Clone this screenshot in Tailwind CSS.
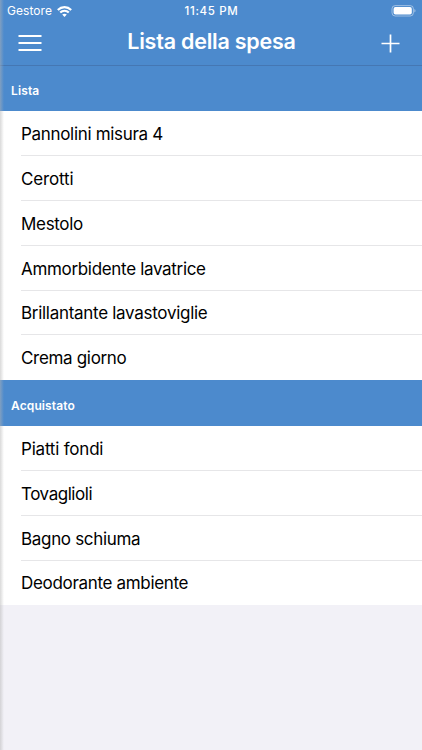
<!DOCTYPE html>
<html lang="it">
<head>
<meta charset="utf-8">
<title>Lista della spesa</title>
<script src="https://cdn.jsdelivr.net/npm/@tailwindcss/browser@4"></script>
</head>
<body class="relative h-[750px] w-[422px] overflow-hidden bg-[#f2f1f7] font-['Inter','Liberation_Sans',sans-serif]">
<header class="flex h-[66px] flex-col border-b border-[#4577b3] bg-[#4c8acd] text-white">
  <div class="grid h-[22px] grid-cols-3 items-center pl-[7px] pr-[6px]">
    <div class="flex items-center gap-[5px] text-[12px] leading-[22px] tracking-[0.05px]">
      <span>Gestore</span>
      <svg class="h-[11px] w-[15px]" viewBox="0 0 15 11" fill="none" stroke="white" stroke-width="2.1"><path d="M.8 4C4.6.2 10.4.2 14.2 4M3.2 6.6c2.4-2.5 6.2-2.5 8.6 0"/><path d="M7.5 10.9 5.2 8.6c1.3-1.2 3.3-1.2 4.6 0z" fill="white" stroke="none"/></svg>
    </div>
    <div class="text-center text-[11.5px] leading-[22px] font-medium tracking-[0.65px]">11:45 PM</div>
    <svg class="h-[12px] w-[25px] justify-self-end" viewBox="0 0 25 12"><rect x="1" y=".6" width="21.4" height="10.4" rx="3.2" fill="none" stroke="white" stroke-opacity=".45"/><rect x="2.6" y="2.1" width="18.2" height="7.4" rx="1.8" fill="white"/><path d="M23.4 4v3.6c1.5-.6 1.5-3 0-3.6" fill="white" fill-opacity=".5"/></svg>
  </div>
  <div class="flex h-[42px] items-center justify-between pl-[18px] pr-[22px]">
    <svg class="h-[18px] w-[24px]" viewBox="0 0 24 18" fill="white"><path d="M.5.9h23v2.2H.5zM.5 7.9h23v2.2H.5zM.5 14.9h23v2.2H.5z"/></svg>
    <h1 class="pb-1 text-[21.5px] leading-[28px] font-semibold tracking-[-0.23px]">Lista della spesa</h1>
    <svg class="h-[19px] w-[19px]" viewBox="0 0 19 19" stroke="white" stroke-width="1.7"><path d="M.5 9.5h18M9.5.5v18"/></svg>
  </div>
</header>
<main class="text-[17px] leading-[24px] tracking-[-0.32px] text-black">
  <h2 class="flex h-[45px] items-center bg-[#4c8acd] pt-[5px] pl-[11px] text-[12px] font-semibold tracking-[0.12px] text-white">Lista</h2>
  <ul class="bg-white pl-[21px]">
    <li class="flex h-[45.2px] items-center border-b border-[#e6e6e8] pt-[2px]"><span>Pannolini misura 4</span></li>
    <li class="flex h-[44.8px] items-center border-b border-[#e6e6e8] pt-[2px]"><span class="tracking-[-0.15px]">Cerotti</span></li>
    <li class="flex h-[44.8px] items-center border-b border-[#e6e6e8] pt-[2px]"><span>Mestolo</span></li>
    <li class="flex h-[44.8px] items-center border-b border-[#e6e6e8] pt-[2px]"><span>Ammorbidente lavatrice</span></li>
    <li class="flex h-[44.8px] items-center border-b border-[#e6e6e8] pt-[2px]"><span class="tracking-[-0.29px]">Brillantante lavastoviglie</span></li>
    <li class="flex h-[44.6px] items-center pt-[1px]"><span>Crema giorno</span></li>
  </ul>
  <h2 class="flex h-[46px] items-center bg-[#4c8acd] pt-[6px] pl-[11px] text-[12px] font-semibold tracking-[0.12px] text-white">Acquistato</h2>
  <ul class="bg-white pl-[21px]">
    <li class="flex h-[45px] items-center border-b border-[#e6e6e8] pt-[2px]"><span class="tracking-[-0.2px]">Piatti fondi</span></li>
    <li class="flex h-[44.8px] items-center border-b border-[#e6e6e8] pt-[2px]"><span class="tracking-[-0.45px]">Tovaglioli</span></li>
    <li class="flex h-[44.8px] items-center border-b border-[#e6e6e8] pt-[2px]"><span>Bagno schiuma</span></li>
    <li class="flex h-[44.4px] items-center pt-[1px]"><span>Deodorante ambiente</span></li>
  </ul>
</main>
<div class="absolute inset-y-0 left-0 w-[4px] bg-linear-to-r from-[#b4b4b4]/50 to-transparent"></div>
</body>
</html>
